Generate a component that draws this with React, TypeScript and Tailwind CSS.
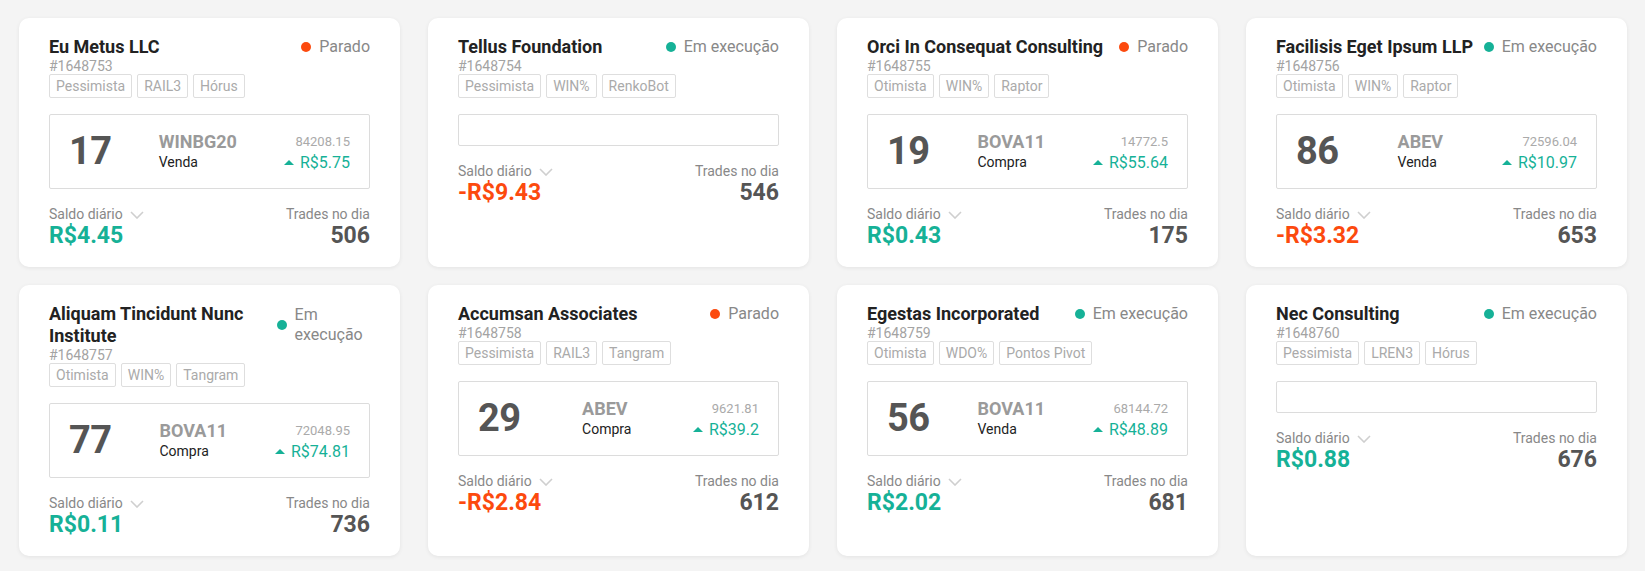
interface Position {
  qty: number;
  ticker: string;
  side: string;
  price: string;
  change: string;
}

interface Robot {
  name: string;
  id: string;
  running: boolean;
  tags: string[];
  position: Position | null;
  balance: string;
  negative: boolean;
  trades: number;
}

const robots: Robot[] = [
  { name: 'Eu Metus LLC', id: '#1648753', running: false, tags: ['Pessimista', 'RAIL3', 'Hórus'], position: { qty: 17, ticker: 'WINBG20', side: 'Venda', price: '84208.15', change: 'R$5.75' }, balance: 'R$4.45', negative: false, trades: 506 },
  { name: 'Tellus Foundation', id: '#1648754', running: true, tags: ['Pessimista', 'WIN%', 'RenkoBot'], position: null, balance: '-R$9.43', negative: true, trades: 546 },
  { name: 'Orci In Consequat Consulting', id: '#1648755', running: false, tags: ['Otimista', 'WIN%', 'Raptor'], position: { qty: 19, ticker: 'BOVA11', side: 'Compra', price: '14772.5', change: 'R$55.64' }, balance: 'R$0.43', negative: false, trades: 175 },
  { name: 'Facilisis Eget Ipsum LLP', id: '#1648756', running: true, tags: ['Otimista', 'WIN%', 'Raptor'], position: { qty: 86, ticker: 'ABEV', side: 'Venda', price: '72596.04', change: 'R$10.97' }, balance: '-R$3.32', negative: true, trades: 653 },
  { name: 'Aliquam Tincidunt Nunc Institute', id: '#1648757', running: true, tags: ['Otimista', 'WIN%', 'Tangram'], position: { qty: 77, ticker: 'BOVA11', side: 'Compra', price: '72048.95', change: 'R$74.81' }, balance: 'R$0.11', negative: false, trades: 736 },
  { name: 'Accumsan Associates', id: '#1648758', running: false, tags: ['Pessimista', 'RAIL3', 'Tangram'], position: { qty: 29, ticker: 'ABEV', side: 'Compra', price: '9621.81', change: 'R$39.2' }, balance: '-R$2.84', negative: true, trades: 612 },
  { name: 'Egestas Incorporated', id: '#1648759', running: true, tags: ['Otimista', 'WDO%', 'Pontos Pivot'], position: { qty: 56, ticker: 'BOVA11', side: 'Venda', price: '68144.72', change: 'R$48.89' }, balance: 'R$2.02', negative: false, trades: 681 },
  { name: 'Nec Consulting', id: '#1648760', running: true, tags: ['Pessimista', 'LREN3', 'Hórus'], position: null, balance: 'R$0.88', negative: false, trades: 676 },
];

const RobotCard = ({ robot }: { robot: Robot }) => (
  <div className="bg-white rounded-[10px] shadow-[0_1px_4px_rgba(0,0,0,0.07)] px-[30px] pt-[18px] pb-[19px]">
    {/* Header */}
    <div className="flex items-center justify-between">
      <h3 className="text-[18px] leading-[22px] font-bold text-[#222]">{robot.name}</h3>
      <div className="flex items-center gap-[8px] ml-[8px] text-[16px] leading-[20px] text-[#888]">
        <span className={`w-[10px] h-[10px] rounded-full shrink-0 ${robot.running ? 'bg-[#16b197]' : 'bg-[#fc4a0e]'}`} />
        <span>{robot.running ? 'Em execução' : 'Parado'}</span>
      </div>
    </div>
    <div className="text-[14px] leading-[16px] text-[#a3a3a3]">{robot.id}</div>
    <div className="flex gap-[5px]">
      {robot.tags.map(tag => (
        <span key={tag} className="border border-[#dedede] rounded-[2px] px-[6px] text-[14px] leading-[22px] text-[#aaa]">
          {tag}
        </span>
      ))}
    </div>

    {/* Position */}
    {robot.position ? (
      <div className="mt-[16px] border border-[#dcdcdc] rounded-[2px] px-[19px] py-[15px] flex items-center justify-between">
        <div className="text-[38px] leading-[43px] font-bold tracking-[-0.5px] text-[#555]">{robot.position.qty}</div>
        <div>
          <div className="text-[18px] leading-[21px] font-bold text-[#9a9a9a]">{robot.position.ticker}</div>
          <div className="text-[14px] leading-[21px] text-[#222]">{robot.position.side}</div>
        </div>
        <div className="text-right">
          <div className="text-[13px] leading-[21px] text-[#aaa]">{robot.position.price}</div>
          <div className="flex items-center justify-end gap-[6px] text-[16px] leading-[21px] text-[#16b197]">
            <svg width="10" height="5" viewBox="0 0 10 5" className="shrink-0">
              <path d="M0 5 L5 0 L10 5 Z" fill="#16b197" />
            </svg>
            {robot.position.change}
          </div>
        </div>
      </div>
    ) : (
      <div className="mt-[16px] border border-[#dcdcdc] rounded-[2px] h-[32px]" />
    )}

    {/* Footer */}
    <div className="mt-[16px] flex items-start justify-between">
      <div>
        <div className="flex items-center gap-[7px] text-[14px] leading-[19px] text-[#888]">
          Saldo diário
          <svg width="14" height="8" viewBox="0 0 14 8" className="shrink-0">
            <path d="M1 1 L7 7 L13 1" fill="none" stroke="#cfcfcf" strokeWidth="1.6" />
          </svg>
        </div>
        <div className={`text-[23px] leading-[24px] font-bold ${robot.negative ? 'text-[#fc4a0e]' : 'text-[#16b197]'}`}>
          {robot.balance}
        </div>
      </div>
      <div className="text-right">
        <div className="text-[14px] leading-[19px] text-[#888]">Trades no dia</div>
        <div className="text-[23px] leading-[24px] font-bold text-[#555]">{robot.trades}</div>
      </div>
    </div>
  </div>
);

export default function App() {
  return (
    <div className="min-h-screen bg-[#f4f4f4] font-['Roboto',sans-serif] pt-[18px] pl-[19px] pr-[18px] pb-[16px]">
      <div className="grid grid-cols-4 gap-x-[28px] gap-y-[18px]">
        {robots.map(r => (
          <RobotCard key={r.id} robot={r} />
        ))}
      </div>
    </div>
  );
}
